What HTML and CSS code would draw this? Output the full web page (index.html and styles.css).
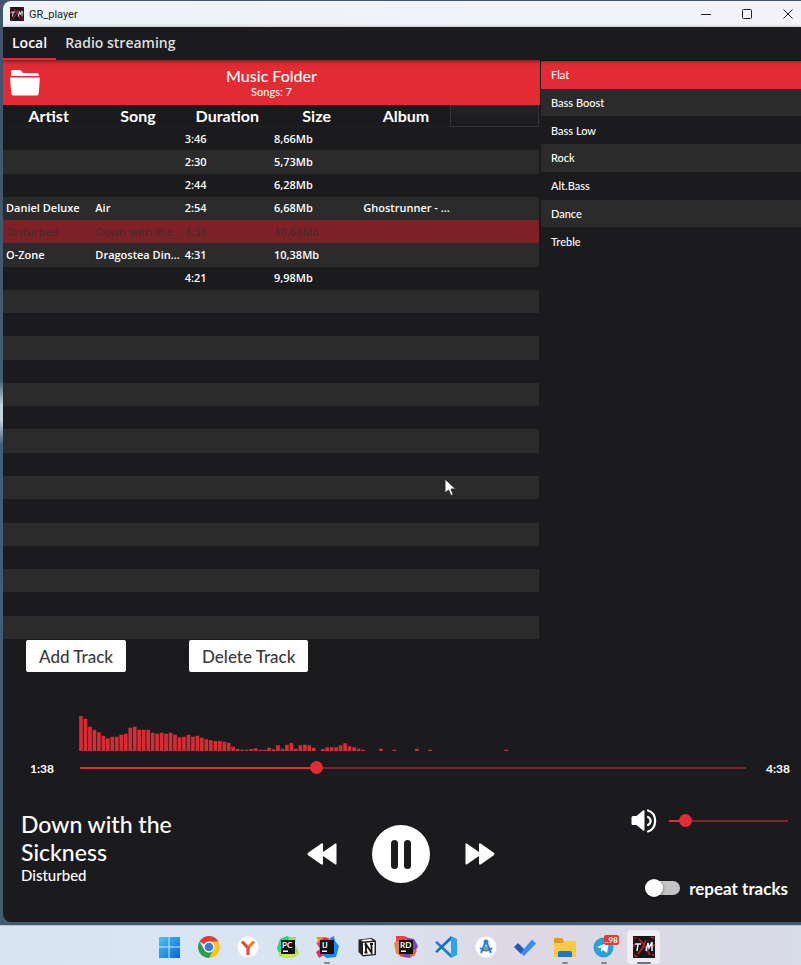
FILE: index.html
```html
<!DOCTYPE html>
<html lang="en">
<head>
<meta charset="utf-8">
<title>GR_player</title>
<link rel="stylesheet" href="styles.css">
</head>
<body>
<svg class="defs" aria-hidden="true">
  <symbol id="logo" viewBox="0 0 22 22">
    <path fill="#171719" d="M0 0h22v22H0z"/>
    <path fill="none" stroke="#c4202b" stroke-width="1.6" d="M1 2h2M18 1l3 1M1 8v3M1 19l3 2M19 18l2 2M21 8v3M6 3l5 6 3 5 3 5M13 4l-3 7-5 7"/>
    <path fill="none" stroke="#f2f2f2" stroke-width="1.5" d="M2 8h6M5 8l-1 7M13 15l2-8 1 5 3-6v9"/>
  </symbol>
</svg>
<div class="window">
  <header class="titlebar">
    <svg class="app-icon"><use href="#logo"/></svg>
    <span class="app-name">GR_player</span>
    <div class="caption">
      <button aria-label="Minimize"><svg viewBox="0 0 10 10"><path d="M0 5.500h10"/></svg></button>
      <button aria-label="Maximize"><svg viewBox="0 0 10 10"><rect x=".5" y=".5" width="9" height="9" rx="1"/></svg></button>
      <button aria-label="Close"><svg viewBox="0 0 10 10"><path d="M.5.5l9 9M9.500.5l-9 9"/></svg></button>
    </div>
  </header>
  <nav class="tabs">
    <button class="tab active">Local</button>
    <button class="tab">Radio streaming</button>
  </nav>
  <main class="content">
    <section class="library">
      <div class="folder">
        <button class="folder-button" aria-label="Open folder">
          <svg viewBox="0 0 30 27"><path d="M1 7V2.500Q1 1 2.500 1h8l2.500 3h14q2 0 2 3z"/><path d="M0 8.500h30l-1.300 16q-.2 2-2 2H3.300q-1.800 0-2-2z"/></svg>
        </button>
        <div class="folder-text">
          <h1>Music Folder</h1>
          <p>Songs: 7</p>
        </div>
      </div>
      <div class="table-area">
        <table class="tracks">
          <thead><tr><th>Artist</th><th>Song</th><th>Duration</th><th>Size</th><th>Album</th><th class="filler"></th></tr></thead>
          <tbody>
            <tr><td></td><td></td><td>3:46</td><td>8,66Mb</td><td></td><td></td></tr>
            <tr><td></td><td></td><td>2:30</td><td>5,73Mb</td><td></td><td></td></tr>
            <tr><td></td><td></td><td>2:44</td><td>6,28Mb</td><td></td><td></td></tr>
            <tr><td>Daniel Deluxe</td><td>Air</td><td>2:54</td><td>6,68Mb</td><td>Ghostrunner - ...</td><td></td></tr>
            <tr class="playing"><td>Disturbed</td><td>Down with the...</td><td>4:38</td><td>10,68Mb</td><td></td><td></td></tr>
            <tr><td>O-Zone</td><td>Dragostea Din...</td><td>4:31</td><td>10,38Mb</td><td></td><td></td></tr>
            <tr><td></td><td></td><td>4:21</td><td>9,98Mb</td><td></td><td></td></tr>
            <tr><td colspan="6"></td></tr>
            <tr><td colspan="6"></td></tr>
            <tr><td colspan="6"></td></tr>
            <tr><td colspan="6"></td></tr>
            <tr><td colspan="6"></td></tr>
            <tr><td colspan="6"></td></tr>
            <tr><td colspan="6"></td></tr>
            <tr><td colspan="6"></td></tr>
            <tr><td colspan="6"></td></tr>
            <tr><td colspan="6"></td></tr>
            <tr><td colspan="6"></td></tr>
            <tr><td colspan="6"></td></tr>
            <tr><td colspan="6"></td></tr>
            <tr><td colspan="6"></td></tr>
            <tr><td colspan="6"></td></tr>
          </tbody>
        </table>
      </div>
      <div class="actions">
        <button>Add Track</button>
        <button>Delete Track</button>
      </div>
    </section>
    <ul class="presets">
      <li><button class="selected">Flat</button></li>
      <li><button>Bass Boost</button></li>
      <li><button>Bass Low</button></li>
      <li><button>Rock</button></li>
      <li><button>Alt.Bass</button></li>
      <li><button>Dance</button></li>
      <li><button>Treble</button></li>
    </ul>
  </main>
  <section class="player">
    <svg class="spectrum" viewBox="0 0 1998 108" preserveAspectRatio="none" aria-hidden="true">
      <path d="M6 108v-105m13.430 105v-97m13.430 97v-73m13.430 73v-64m13.430 64v-56m13.430 56v-46m13.430 46v-38m13.430 38v-43m13.430 43v-43m13.430 43v-49m13.430 49v-52m13.430 52v-70m13.430 70v-73m13.430 73v-64m13.430 64v-64m13.430 64v-64m13.430 64v-55m13.430 55v-52m13.430 52v-55m13.430 55v-52m13.430 52v-55m13.430 55v-49m13.430 49v-41m13.430 41v-43m13.430 43v-49m13.430 49v-43m13.430 43v-46m13.430 46v-40m13.430 40v-35m13.430 35v-32m13.430 32v-30m13.430 30v-30m13.430 30v-28m13.430 28v-25m13.430 25v-13m13.430 13v-6m13.430 6v-4m13.430 4v-4m13.430 4v-6m13.430 6v-8m13.430 8v-4m13.430 4v-4m13.430 4v-10m13.430 10v-5m13.430 5v-17m13.430 17v-7m13.430 7v-19m13.430 19v-24m13.430 24v-7m13.430 7v-17m13.430 17v-19m13.430 19v-17m13.430 17v-10m26.860 10v-6m13.430 6v-11m13.430 11v-11m13.430 11v-11m13.430 11v-17m13.430 17v-23m13.430 23v-14m13.430 14v-11m13.430 11v-7m13.430 7v-4m53.720 4v-7m40.290 7v-4m67.150 4v-7m40.290 7v-4m228.310 4v-4"/>
    </svg>
    <div class="seek">
      <span class="time">1:38</span>
      <input type="range" aria-label="Position" min="0" max="278" value="98" style="--fill: 35.500%">
      <span class="time end">4:38</span>
    </div>
    <div class="deck">
      <div class="now">
        <h2>Down with the Sickness</h2>
        <p>Disturbed</p>
      </div>
      <div class="transport">
        <button class="skip" aria-label="Previous"><svg viewBox="0 0 30 22"><path d="M1.200 9.800L14 .7q2-1.200 2 1V9L28 .7q1.500-1 1.500 1v18.600q0 2-1.500 1L16 13v7.300q0 2.200-2 1L1.200 12.200q-1.400-1.200 0-2.400z"/></svg></button>
        <button class="pause" aria-label="Pause"><svg viewBox="0 0 58 58"><circle cx="29" cy="29" r="29"/><rect x="19" y="15" width="7" height="29" rx="3.500"/><rect x="32" y="15" width="7" height="29" rx="3.500"/></svg></button>
        <button class="skip" aria-label="Next"><svg viewBox="0 0 30 22"><path d="M28.800 9.800L16 .7q-2-1.200-2 1V9L2 .7Q.5-.3.5 1.700v18.600q0 2 1.500 1L14 13v7.300q0 2.200 2 1l12.800-9.100q1.400-1.200 0-2.400z"/></svg></button>
      </div>
      <div class="options">
        <div class="volume">
          <svg viewBox="0 0 26 24" aria-hidden="true"><path fill="#fff" d="M2 7h3.500L12 1.500q1.500-1 1.500.8v18.400q0 1.800-1.500.8L5.500 16H2q-1.500 0-1.500-1.500v-6Q.5 7 2 7z"/><path fill="none" stroke="#fff" stroke-width="2.200" stroke-linecap="round" d="M17 1.500c9.500 3 9.500 18 0 21M17 8c3.500 2 3.500 6 0 8"/></svg>
          <input type="range" aria-label="Volume" min="0" max="100" value="9" style="--fill: 13%">
        </div>
        <label class="repeat"><input type="checkbox">repeat tracks</label>
      </div>
    </div>
  </section>
</div>
<nav class="taskbar">
  <div class="dock">
    <a href="#" aria-label="Start"><svg viewBox="0 0 24 24"><defs><linearGradient id="win" x2="1" y2="1"><stop stop-color="#4cc5fa"/><stop offset="1" stop-color="#0268d4"/></linearGradient></defs><path fill="url(#win)" d="M2 2h9.500v9.500H2zM12.500 2H23v9.500H12.500zM2 12.500h9.500V23H2zM12.500 12.500H23V23H12.500z"/></svg></a>
    <a href="#" aria-label="Chrome"><svg viewBox="0 0 24 24"><path fill="#d93f35" d="M12 12L2.500 6.500a11 11 0 0 1 19 0z"/><path fill="#f9c51d" d="M12 12V6.500h9.500A11 11 0 0 1 12 23z"/><path fill="#2e9b4f" d="M12 23A11 11 0 0 1 2.500 6.500L7.200 14.700 12 17.500l4.500-2.700z"/><circle cx="12" cy="12" r="5.500" fill="#fff"/><circle cx="12" cy="12" r="4.300" fill="#3b78e7"/></svg></a>
    <a href="#" aria-label="Yandex"><svg viewBox="0 0 24 24"><circle cx="12" cy="12" r="10.500" fill="#fff"/><path fill="none" stroke="#ef7a2a" stroke-width="3.200" d="M18 6.500L12 13"/><path fill="none" stroke="#f0453c" stroke-width="3.200" d="M6 6.500l6 6.500v7"/></svg></a>
    <a href="#" aria-label="PyCharm"><svg viewBox="0 0 24 24"><path fill="#21d789" d="M4 4l7-3 6 3 1 8-7 11-7-2-3-8z"/><path fill="#8fe05a" d="M13 2l7 0-1 7 4 9-4 4-9 1z"/><path fill="#c9ec3c" d="M2 17l5 6 9-1 7-3-4-3z"/><path fill="#111" d="M5 5h14v14H5z"/><path fill="#fff" d="M7 15.500h5v1.500H7z"/><text x="6" y="12.500">PC</text></svg></a>
    <a href="#" class="running" aria-label="IntelliJ IDEA"><svg viewBox="0 0 24 24"><path fill="#fe8a2b" d="M1 2h8l-1 9-7-2 2-4z"/><path fill="#f0286c" d="M2 9l7-7 5 1-3 16-7 4-3-6 4-3z"/><path fill="#1687f5" d="M15 3l4-2 1 5 4 5-3 11-9 1-5-3z"/><path fill="#111" d="M5 5h14v14H5z"/><path fill="#fff" d="M7 15.500h5v1.500H7z"/><text x="7" y="12.500">IJ</text></svg></a>
    <a href="#" aria-label="Notion"><svg viewBox="0 0 24 24"><path fill="#222" d="M3.500 4.500L17 3l4 3v14L8 21.500 3.500 17z"/><path fill="#fff" d="M8 8l11.500-1v12L8 20zM6 5l10-1 2 1.500L8 6.500z"/><path fill="none" stroke="#111" stroke-width="1.800" d="M11 18V9.500l5.500 8V9M9.500 9.500H12M15 9h3M9.500 17.500h3"/></svg></a>
    <a href="#" aria-label="Rider"><svg viewBox="0 0 24 24"><path fill="#ef3f46" d="M2 1h8l10 4-6 16-7 1-5-8z"/><path fill="#e5892f" d="M0 8l6-3v16l-4-3z"/><path fill="#7b43c5" d="M13 3l7 1 4 7-4 8-4 4-7-1z"/><path fill="#e8652f" d="M20 14l3 2-3 5-5 1z"/><path fill="#111" d="M5 5h14v14H5z"/><path fill="#fff" d="M7 15.500h5v1.500H7z"/><text x="6" y="12.500">RD</text></svg></a>
    <a href="#" aria-label="VS Code"><svg viewBox="0 0 24 24"><path fill="#1f7fc4" d="M3 6l14 13v4L1 7.500z"/><path fill="#1a70b4" d="M3 18L17 5V1L1 16.500z"/><path fill="#2ea3ee" d="M17 1l6 3v16l-6 3z"/></svg></a>
    <a href="#" aria-label="Android Studio"><svg viewBox="0 0 24 24"><circle cx="12" cy="12" r="10.500" fill="#fff"/><path fill="none" stroke="#3978df" stroke-width="2" d="M12 6L7 18M12 6l5 12M6 13q6 5 12 0"/><circle cx="12" cy="7" r="2.500" fill="#3978df"/><circle cx="12" cy="13" r="2" fill="#4fb873"/></svg></a>
    <a href="#" aria-label="To Do"><svg viewBox="0 0 24 24"><path fill="#2458b5" d="M1 12l4-4 7 7-4 4z"/><path fill="#3f8cf0" d="M7.500 18L19 4.500l4 4L11 21z"/></svg></a>
    <a href="#" class="running" aria-label="Explorer"><svg viewBox="0 0 24 24"><path fill="#df9b1e" d="M1 4q0-1 1-1h7l2 3v4H1z"/><path fill="#f9cb45" d="M1 8h8l2-2h11q1 0 1 1v15H1z"/><path fill="#1878c9" d="M5 22v-4q0-2 2-2h10q2 0 2 2v4z"/></svg></a>
    <a href="#" class="running" aria-label="Telegram"><svg viewBox="0 0 24 24"><circle cx="11.500" cy="12.500" r="10" fill="#2c9fd7"/><path fill="#fff" d="M5 12l12-5-2 11-4-3-2 2v-4l6-4-7 4z"/></svg><span class="badge">..98</span></a>
    <a href="#" class="running current" aria-label="GR_player"><svg><use href="#logo"/></svg></a>
  </div>
</nav>
<svg class="cursor" viewBox="0 0 12 19" aria-hidden="true"><path d="M1 1v14l3.500-3 2.500 5.500 2.200-1L7 11h4.500z"/></svg>
</body>
</html>
```
FILE: styles.css
```css
:root {
  --bg: #1b1b1d;
  --stripe: #2b2b2b;
  --red: #e22b33;
  --display: Lato, sans-serif;
  --ui: "Open Sans", "Noto Sans", sans-serif;
}

* { box-sizing: border-box; }

body {
  margin: 0;
  height: 100vh;
  min-height: 760px;
  display: grid;
  grid-template-rows: 1fr 40px;
  position: relative;
  overflow: hidden;
  background: linear-gradient(#43546b 0, #3f5e74 380px, #c7d2da 405px, #c7d2da 420px, #3f5e7c 445px, #445b6c 100%);
  font-family: var(--display);
  color: #fff;
}

h1, h2, p, ul { margin: 0; padding: 0; font-weight: 500; }
button { border: 0; padding: 0; background: none; color: inherit; font: inherit; }
svg { display: block; }
.defs { position: absolute; width: 0; height: 0; }

.window {
  margin: 1px 0 3px 3px;
  display: flex;
  flex-direction: column;
  min-height: 0;
  background: var(--bg);
  border-radius: 8px 0 0 8px;
  overflow: hidden;
}

.titlebar {
  display: flex;
  align-items: center;
  height: 26px;
  flex: none;
  padding-left: 7px;
  background: linear-gradient(90deg, #edf3f8, #f3f3f9);
  color: #1c1c1c;
  font: 11px Roboto, sans-serif;
}
.app-icon { width: 14px; height: 14px; margin-right: 5px; }
.caption { display: flex; margin-left: auto; }
.caption button { width: 41px; height: 24px; display: grid; place-items: center; }
.caption button:last-child { width: 34px; padding-left: 7px; }
.caption svg { width: 10px; height: 10px; fill: none; stroke: #222; }

.tabs {
  display: flex;
  flex: none;
  height: 33px;
  position: relative;
  box-shadow: 0 1px 4px #0008;
  font: 600 14px var(--ui);
}
.tab { padding: 0 9px; color: #dedede; border-bottom: 2px solid transparent; }
.tab.active { color: #fff; border-color: var(--red); }

.content {
  flex: 1;
  min-height: 0;
  display: grid;
  grid-template-columns: minmax(0, 537fr) minmax(0, 260fr);
  column-gap: 1px;
}
.library { display: flex; flex-direction: column; min-height: 0; }
.folder {
  display: grid;
  grid-template-columns: 44px 1fr 44px;
  align-items: center;
  height: 45px;
  flex: none;
  background: var(--red);
  text-align: center;
}
.folder-button { justify-self: center; }
.folder svg { width: 30px; height: 27px; fill: #fff; }
.folder h1 { font-size: 16px; line-height: 19px; }
.folder p { font-size: 11px; line-height: 14px; }

.table-area { flex: 1; min-height: 0; padding-right: 1px; }
.tracks {
  width: 100%;
  height: 100%;
  table-layout: fixed;
  border-collapse: separate;
  border-spacing: 0;
}
.tracks th { height: 22px; padding: 1px 0 0 2px; font-size: 16px; line-height: 20px; font-weight: 700; border-bottom: 1px solid #202022; }
.tracks .filler { border: 1px solid #343436; background: linear-gradient(#242426, #1a1a1c); }
.tracks td {
  height: 23px;
  padding: 0 0 0 3px;
  font: 600 11px/16px var(--ui);
  white-space: nowrap;
}
.tracks tbody tr:nth-child(even) { background: var(--stripe); }
.tracks tbody .playing { background: #7d2127; color: #4b2a2c; }

.actions { display: flex; gap: 63px; padding: 1px 23px 0; flex: none; }
.actions button {
  height: 32px;
  padding: 0 13px;
  border-radius: 2px;
  background: #fff;
  color: #3a3a3c;
  font-size: 17px;
  font-weight: 500;
}

.presets {
  list-style: none;
  display: grid;
  grid-template-rows: repeat(7, 1fr);
  height: 194px;
  margin-top: 1px;
}
.presets button {
  display: block;
  width: 100%;
  height: 100%;
  padding: 0 10px;
  text-align: left;
  font-size: 11px;
  font-weight: 500;
}
.presets li:nth-child(even) { background: var(--stripe); }
.presets .selected { background: var(--red); }

.player { flex: none; padding-top: 43px; }
.spectrum { height: 36px; width: calc(100% - 132px); margin-left: 76px; }
.spectrum path { stroke: #d72c34; stroke-width: 11; fill: none; }

.seek {
  display: grid;
  grid-template-columns: 77px 1fr 55px;
  align-items: center;
  height: 20px;
  margin-top: 7px;
}
.time { font-size: 12px; font-weight: 700; padding-left: 27px; }
.time.end { padding-left: 20px; }

input[type="range"] {
  appearance: none;
  width: 100%;
  height: 14px;
  margin: 0;
  background: none;
}
input[type="range"]::-webkit-slider-runnable-track {
  height: 2px;
  background: linear-gradient(90deg, var(--red) var(--fill), #82222a var(--fill));
}
input[type="range"]::-webkit-slider-thumb {
  appearance: none;
  width: 13px;
  height: 13px;
  margin-top: -6px;
  border-radius: 50%;
  background: var(--red);
}

.deck {
  display: grid;
  grid-template-columns: 1fr auto 1fr;
  padding: 28px 13px 21px 11px;
}
.now { padding: 4px 0 0 7px; }
.now h2 { max-width: 170px; font-size: 23px; line-height: 28px; }
.now p { font-size: 15px; line-height: 18px; }
.transport { display: flex; align-items: center; gap: 35px; }
.skip svg { width: 30px; height: 22px; fill: #fff; }
.pause svg { width: 58px; height: 58px; fill: #fff; }
.pause rect { fill: var(--bg); }

.options {
  display: flex;
  flex-direction: column;
  justify-content: space-between;
  align-items: flex-end;
  min-height: 95px;
}
.volume { display: flex; align-items: center; gap: 12px; height: 30px; }
.volume svg { width: 26px; height: 24px; }
.volume input { width: 119px; }
.repeat { display: flex; align-items: center; gap: 9px; height: 26px; font-size: 17px; font-weight: 700; }
.repeat input {
  appearance: none;
  position: relative;
  width: 35px;
  height: 14px;
  margin: 0;
  border-radius: 7px;
  background: #c4c4c6;
}
.repeat input::before {
  content: "";
  position: absolute;
  left: 0;
  top: -2px;
  width: 18px;
  height: 18px;
  border-radius: 50%;
  background: #fff;
  box-shadow: 0 1px 3px #0008;
}

.taskbar {
  padding-left: 12px;
  border-top: 1px solid #b7c1cd;
  background: linear-gradient(90deg, #d8e5f1, #d9e4f0 45%, #ddd8e4 65%, #d8dbe8);
}
.dock { display: flex; max-width: 514px; height: 100%; margin: 0 auto; }
.dock a { flex: 1; position: relative; display: grid; place-items: center; padding-top: 2px; }
.dock svg { width: 24px; height: 24px; position: relative; }
.dock text { font: bold 8px var(--display); fill: #fff; }
.dock .running::after {
  content: "";
  position: absolute;
  bottom: 1px;
  left: calc(50% - 3px);
  width: 6px;
  height: 2px;
  border-radius: 1px;
  background: #85878f;
}
.dock .current::before {
  content: "";
  position: absolute;
  inset: 4px 3px 1px;
  border-radius: 4px;
  background: #f0edf3;
}
.dock .current::after { left: calc(50% - 7px); width: 14px; background: #5b7488; }
.dock .current svg { width: 22px; height: 22px; }
.badge {
  position: absolute;
  top: 9px;
  right: 5px;
  padding: 0 1px;
  border-radius: 2px;
  background: #e03a36;
  color: #fff;
  font: bold 8px/10px var(--display);
}

.cursor { position: absolute; left: 444px; top: 478px; width: 12px; height: 19px; fill: #fff; stroke: #333; }
```
